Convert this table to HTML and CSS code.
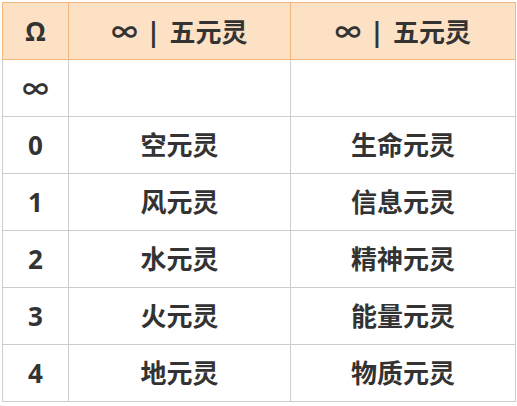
FILE: index.html
```html
<!DOCTYPE html>
<html lang="zh">
<head>
<meta charset="utf-8">
<link rel="stylesheet" href="styles.css">
</head>
<body>
<div class="wrap">
<table class="grid">
  <colgroup>
    <col class="c0"><col class="c1"><col class="c2">
  </colgroup>
  <thead>
    <tr><th>Ω</th><th><span class="sym">∞</span> | 五元灵</th><th><span class="sym">∞</span> | 五元灵</th></tr>
  </thead>
  <tbody>
    <tr><td><span class="sym">∞</span></td><td></td><td></td></tr>
    <tr><td>0</td><td>空元灵</td><td>生命元灵</td></tr>
    <tr><td>1</td><td>风元灵</td><td>信息元灵</td></tr>
    <tr><td>2</td><td>水元灵</td><td>精神元灵</td></tr>
    <tr><td>3</td><td>火元灵</td><td>能量元灵</td></tr>
    <tr><td>4</td><td>地元灵</td><td>物质元灵</td></tr>
  </tbody>
</table>
</div>
</body>
</html>
```
FILE: styles.css
```css
html, body {
  margin: 0;
  padding: 0;
  background: #ffffff;
}
.wrap {
  padding: 2px 0 0 2px;
}
.grid {
  border-collapse: collapse;
  width: 513px;
  font-family: "Open Sans", "Noto Sans CJK SC", sans-serif;
  font-weight: bold;
  font-size: 26px;
  color: #333333;
  table-layout: fixed;
}
.c0 { width: 66px; }
.c1 { width: 222px; }
.c2 { width: 225px; }
.grid th, .grid td {
  height: 57px;
  padding: 0;
  text-align: center;
  vertical-align: middle;
  line-height: 1;
  box-sizing: border-box;
}
.grid th {
  background: #fde1c4;
  border: 1px solid #f2b67e;
  word-spacing: 2px;
}
.grid td {
  border: 1px solid #cccccc;
}
.sym {
  font-family: "Noto Sans CJK SC", sans-serif;
}
```
